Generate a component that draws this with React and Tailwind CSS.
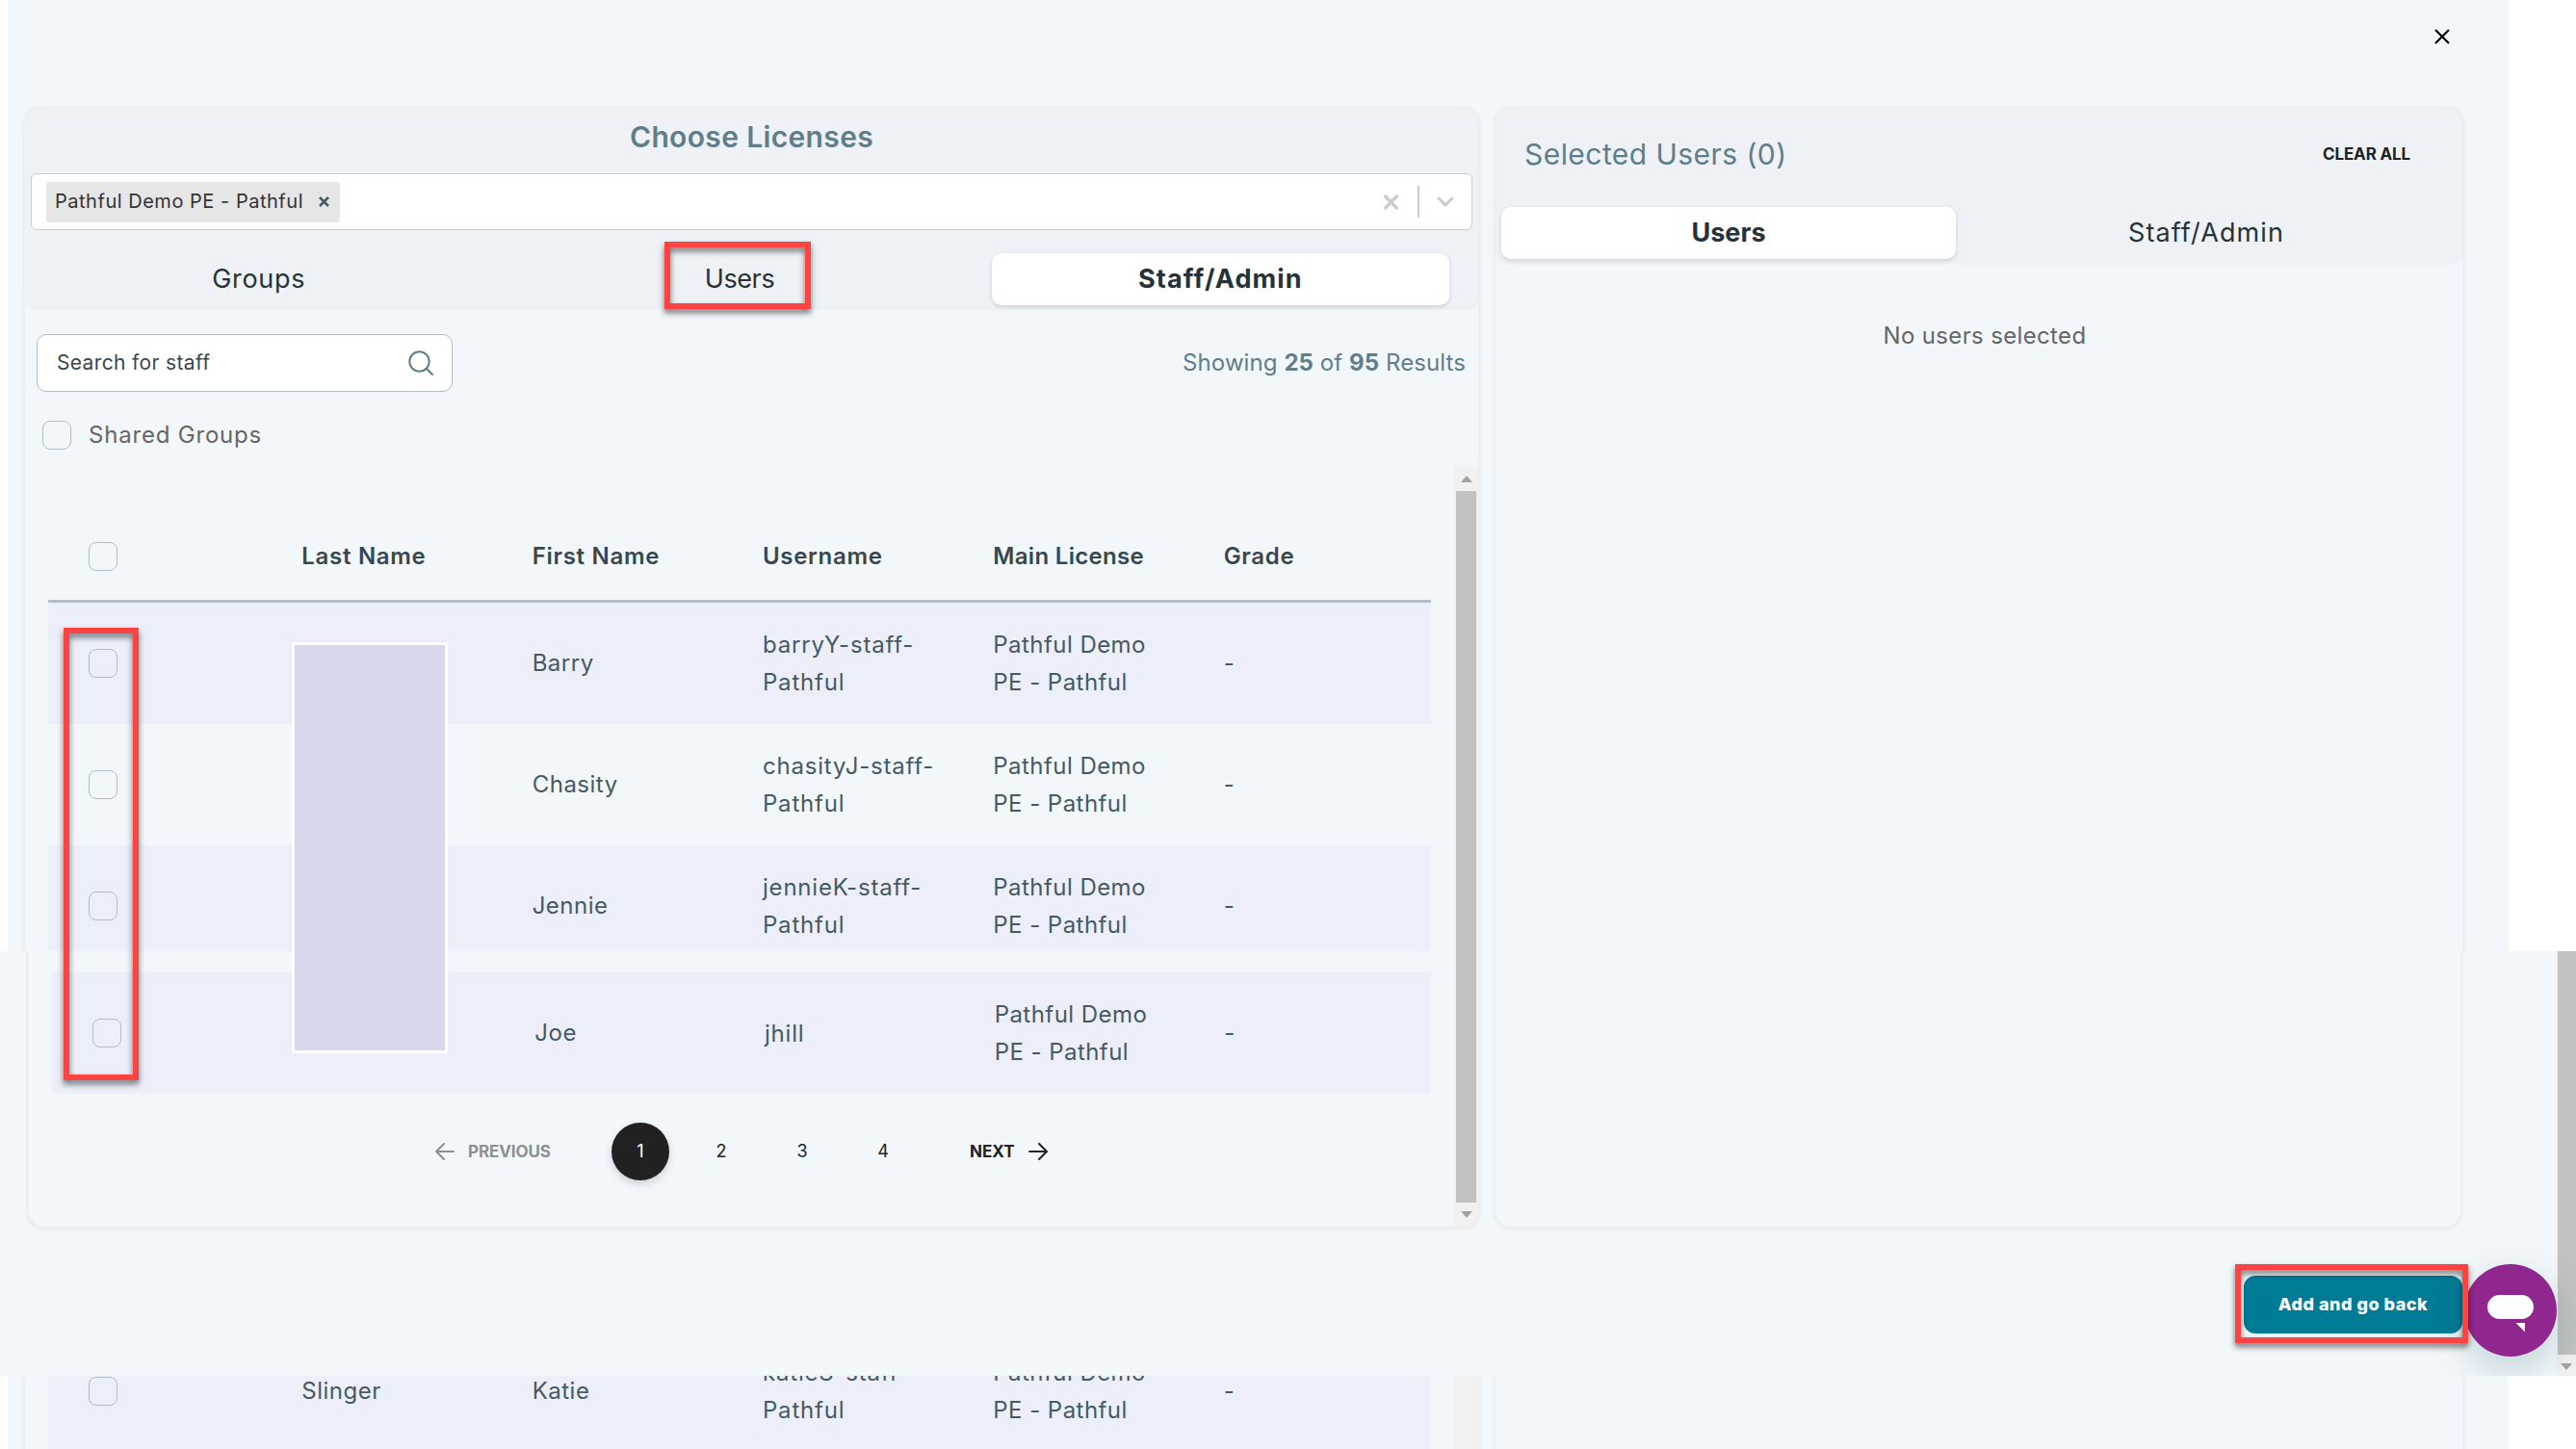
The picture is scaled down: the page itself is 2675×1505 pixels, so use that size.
import React from "react";

const staff = [
  { firstName: "Barry", username: "barryY-staff-Pathful" },
  { firstName: "Chasity", username: "chasityJ-staff-Pathful" },
  { firstName: "Jennie", username: "jennieK-staff-Pathful" },
];

const columns = ["Last Name", "First Name", "Username", "Main License", "Grade"];

const Checkbox = () => (
  <span className="block h-[30px] w-[30px] shrink-0 rounded-[8px] border border-[#b0bec5]" />
);

const TableRow = ({ lastName, firstName, username, striped }) => (
  <div
    className={`grid h-[126px] shrink-0 grid-cols-6 items-center text-2xl leading-[39px] text-[#455a64] ${
      striped ? "bg-[#eceff9]" : ""
    }`}
  >
    <div className="pl-[42px]">
      <Checkbox />
    </div>
    <div className="px-6 pb-[2px] tracking-[0.5px]">{lastName}</div>
    <div className="px-6 pb-[2px] tracking-[0.5px]">{firstName}</div>
    <div className="px-6 tracking-[0.8px]">{username}</div>
    <div className="px-6 tracking-[0.45px]">Pathful Demo PE - Pathful</div>
    <div className="px-6 pb-[2px]">-</div>
  </div>
);

const Tab = ({ label, active, className = "" }) => (
  <div
    className={`flex h-[54px] items-center justify-center text-[27px] text-[#263238] ${
      active
        ? "rounded-[10px] bg-white font-bold shadow-[0_2px_5px_rgba(0,0,0,0.14)]"
        : ""
    } ${className}`}
  >
    {label}
  </div>
);

const Triangle = ({ down }) => (
  <svg width="12" height="7" viewBox="0 0 12 7" className="fill-[#a3a3a3]">
    <path d={down ? "M0 0h12L6 7z" : "M0 7h12L6 0z"} />
  </svg>
);

const Arrow = ({ right }) => (
  <svg
    width="20"
    height="18"
    viewBox="0 0 20 18"
    fill="none"
    stroke="currentColor"
    strokeWidth="2"
    strokeLinecap="round"
    strokeLinejoin="round"
  >
    <path d={right ? "M1 9h17.5M11 1l8 8-8 8" : "M19 9H1.5M9 1L1 9l8 8"} />
  </svg>
);

const Highlight = ({ className }) => (
  <div
    className={`absolute border-[6px] border-[#ff4343] drop-shadow-[0_4px_3px_rgba(0,0,0,0.55)] ${className}`}
  />
);

const App = () => {
  return (
    <div className="relative h-[1505px] w-[2675px] overflow-hidden bg-white font-['Inter',sans-serif]">
      {/* top part of the modal */}
      <section className="h-[988px] overflow-hidden pl-2">
        <div className="flex h-full w-[2597px] flex-col bg-[#f2f7fb]">
          <div className="flex h-[113px] shrink-0 justify-end pr-[61px] pt-[30px]">
            <svg width="16" height="16" viewBox="0 0 16 16" stroke="#000" strokeWidth="2.2">
              <path d="M1 1l14 14M15 1L1 15" />
            </svg>
          </div>
          <div className="flex flex-1 gap-[18px] pl-[18px]">
            <div className="flex w-[1509px] flex-col rounded-t-[16px] shadow-[0_0_2px_3px_#eeeeee]">
              <div className="h-[209px] rounded-t-[16px] rounded-b-[10px] bg-[#eef1f6]">
                <h2 className="mb-[9px] flex h-[58px] items-center justify-center text-3xl font-semibold tracking-[0.35px] text-[#607d8b]">
                  Choose Licenses
                </h2>
                <div className="mx-[6px] flex h-[59px] items-center rounded-[6px] border border-[#cccccc] bg-white pl-[15px] pr-[18px]">
                  <div className="flex h-[42px] w-[305px] items-center rounded-[3px] bg-[#e6e6e6] pl-[9px] text-xl tracking-[0.52px] text-[#333333]">
                    <span className="w-[274px] whitespace-nowrap pb-px">Pathful Demo PE - Pathful</span>
                    <svg width="11" height="11" viewBox="0 0 11 11" stroke="#455a64" strokeWidth="2.6">
                      <path d="M1 1l9 9M10 1l-9 9" />
                    </svg>
                  </div>
                  <svg
                    width="15"
                    height="16"
                    viewBox="0 0 15 16"
                    stroke="#cccccc"
                    strokeWidth="3.4"
                    strokeLinecap="round"
                    className="ml-auto"
                  >
                    <path d="M1.7 2l11.6 12M13.3 2L1.7 14" />
                  </svg>
                  <div className="ml-5 mr-[18px] h-[33px] w-[2px] bg-[#cccccc]" />
                  <svg
                    width="18"
                    height="11"
                    viewBox="0 0 18 11"
                    fill="none"
                    stroke="#cccccc"
                    strokeWidth="3"
                    strokeLinecap="round"
                  >
                    <path d="M2 2l7 7 7-7" />
                  </svg>
                </div>
                <div className="mt-6 grid w-[1484px] grid-cols-3 gap-6 px-[5px]">
                  <Tab label="Groups" className="tracking-[0.7px]" />
                  <Tab label="Users" className="tracking-[-0.4px]" />
                  <Tab label="Staff/Admin" active className="tracking-[1.1px]" />
                </div>
              </div>
              <div className="flex items-center justify-between pl-3 pr-[13px] pt-[25px]">
                <div className="flex h-[60px] w-[432px] items-center justify-between rounded-[10px] border border-[#b0bec5] bg-white pl-[20px] pr-[19px] text-[21px] tracking-[0.35px] text-[#37474f]">
                  Search for staff
                  <svg
                    width="26"
                    height="26"
                    viewBox="0 0 26 26"
                    fill="none"
                    stroke="#607d8b"
                    strokeWidth="2"
                    strokeLinecap="round"
                  >
                    <circle cx="11.5" cy="11.5" r="10.2" />
                    <path d="M19 19l6 6" />
                  </svg>
                </div>
                <p className="text-2xl tracking-[0.08px] text-[#607d8b]">
                  Showing <b>25</b> of <b>95</b> Results
                </p>
              </div>
              <div className="flex items-center gap-[18px] pb-[18px] pl-[18px] pt-[30px] text-2xl leading-[30px] tracking-[0.8px] text-[#666666]">
                <Checkbox />
                Shared Groups
              </div>
              <div className="flex flex-1">
                <div className="ml-6 w-[1436px] pt-12">
                  <div className="grid h-[93px] grid-cols-6 items-center border-b-[3px] border-[#b0bec5] text-2xl font-semibold text-[#37474f]">
                    <div className="pl-[42px]">
                      <Checkbox />
                    </div>
                    {columns.map((column) => (
                      <div
                        key={column}
                        className={`whitespace-nowrap pl-6 ${
                          column === "Main License" ? "tracking-[0.3px]" : "tracking-[0.7px]"
                        }`}
                      >
                        {column}
                      </div>
                    ))}
                  </div>
                  {staff.map((person, index) => (
                    <TableRow key={person.username} {...person} striped={index % 2 === 0} />
                  ))}
                </div>
                <div className="ml-auto flex w-[25px] flex-col items-center bg-[#f1f1f1] pt-[9px]">
                  <Triangle />
                  <div className="mt-[9px] w-[21px] flex-1 bg-[#c1c1c1]" />
                </div>
              </div>
            </div>

            <div className="w-[1004px] rounded-t-[16px] shadow-[0_0_2px_3px_#eeeeee]">
              <div className="h-[162px] rounded-t-[16px] rounded-b-[10px] bg-[#eef1f6] pt-[17px]">
                <div className="flex h-[60px] items-center justify-between pl-[30px] pr-[54px]">
                  <h2 className="text-3xl tracking-[0.45px] text-[#607d8b]">Selected Users (0)</h2>
                  <button className="pt-[2px] text-[17px] font-bold tracking-[-0.15px] text-[#212121]">
                    CLEAR ALL
                  </button>
                </div>
                <div className="mt-[25px] grid w-[980px] grid-cols-2 gap-6 px-[6px]">
                  <Tab label="Users" active />
                  <Tab label="Staff/Admin" className="tracking-[1.1px]" />
                </div>
              </div>
              <p className="pl-3 pt-[58px] text-center text-2xl tracking-[0.35px] text-[#666666]">
                No users selected
              </p>
            </div>
          </div>
        </div>
      </section>

      {/* bottom of the table with the paging and the footer button */}
      <section className="relative flex h-[441px] overflow-hidden bg-[#f2f7fb]">
        <div className="flex flex-1 flex-col">
          <div className="flex h-[286px] gap-[18px] pl-[30px]">
            <div className="flex w-[1505px] overflow-hidden rounded-b-[16px] shadow-[0_1px_2px_3px_#eeeeee]">
              <div className="ml-6 w-[1432px] pt-[22px]">
                <TableRow firstName="Joe" username="jhill" striped />
                <div className="ml-[398px] mt-[30px] flex h-[60px] items-center text-lg text-[#212121]">
                  <div className="flex w-[183px] items-center gap-[14px] text-[17px] font-bold tracking-[-0.1px] text-[#8d8f92]">
                    <Arrow />
                    PREVIOUS
                  </div>
                  <div className="flex gap-6">
                    <span className="flex h-[60px] w-[60px] items-center justify-center rounded-full bg-[#212121] text-white shadow-[0_4px_8px_rgba(0,0,0,0.15)]">
                      1
                    </span>
                    <span className="flex h-[60px] w-[60px] items-center justify-center">2</span>
                    <span className="flex h-[60px] w-[60px] items-center justify-center">3</span>
                    <span className="flex h-[60px] w-[60px] items-center justify-center">4</span>
                  </div>
                  <div className="ml-[60px] flex items-center gap-[14px] text-[17px] font-bold">
                    NEXT
                    <Arrow right />
                  </div>
                </div>
              </div>
              <div className="ml-auto flex w-[25px] flex-col items-center bg-[#f1f1f1] pb-[9px]">
                <div className="mb-[9px] w-[21px] flex-1 bg-[#c1c1c1]" />
                <Triangle down />
              </div>
            </div>
            <div className="w-[1002px] rounded-b-[16px] shadow-[0_1px_2px_3px_#eeeeee]" />
          </div>
          <div className="flex justify-end pr-[97px] pt-[51px]">
            <button className="h-[60px] w-[227px] rounded-[12px] bg-[#007b96] text-lg font-extrabold tracking-[0.5px] text-white">
              Add and go back
            </button>
          </div>
        </div>
        {/* chat launcher */}
        <div className="absolute left-[2559px] top-[325px] flex h-24 w-24 items-center justify-center rounded-full bg-[#90278e] shadow-[0_15px_40px_rgba(0,77,77,0.2)]">
          <svg width="48" height="40" viewBox="0 0 48 40" className="mt-[8px] fill-white">
            <rect width="48" height="25" rx="12.5" />
            <path d="M29.5 29H39v9.5z" />
          </svg>
        </div>
        <div className="flex w-[21px] flex-col items-center bg-[#f1f1f1] pb-[6px]">
          <div className="mb-[9px] ml-[2px] w-[19px] flex-1 bg-[#c1c1c1]" />
          <Triangle down />
        </div>
      </section>

      {/* next rows showing below the footer */}
      <section className="h-[76px] overflow-hidden pl-2">
        <div className="flex h-full w-[2597px] gap-[18px] bg-[#f2f7fb] pl-[18px]">
          <div className="flex w-[1509px] shadow-[0_0_2px_3px_#eeeeee]">
            <div className="-mt-[47px] ml-6 w-[1436px]">
              <TableRow lastName="Slinger" firstName="Katie" username="katieS-staff-Pathful" striped />
            </div>
            <div className="ml-auto w-[25px] bg-[#f1f1f1]" />
          </div>
          <div className="w-[1004px] shadow-[0_0_2px_3px_#eeeeee]" />
        </div>
      </section>

      <div className="absolute left-[303px] top-[667px] h-[427px] w-[162px] border-[3px] border-white bg-[#d8d8ec]" />
      <Highlight className="left-[690px] top-[251px] h-[70px] w-[152px]" />
      <Highlight className="left-[66px] top-[652px] h-[470px] w-[78px]" />
      <Highlight className="left-[2321px] top-[1313px] h-[82px] w-[242px]" />
    </div>
  );
};

export default App;
